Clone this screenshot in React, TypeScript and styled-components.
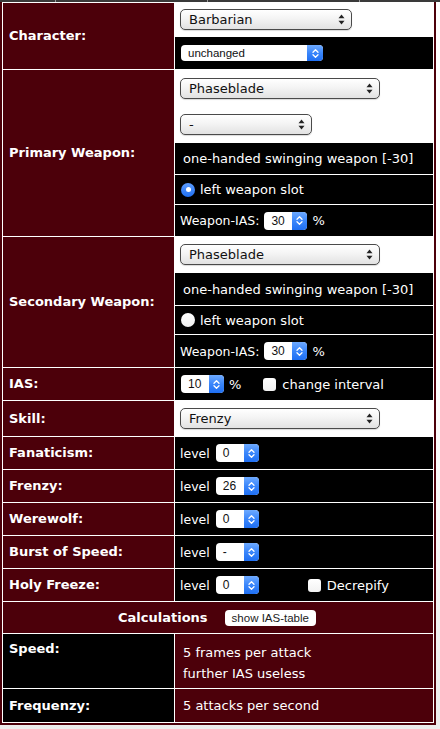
import React from "react";
import styled, { createGlobalStyle } from "styled-components";

const RED = "#4c000a";
const BLACK = "#000000";
const WHITE = "#ffffff";

const GlobalStyle = createGlobalStyle`
  html, body { margin: 0; padding: 0; }
  body {
    min-height: 729px;
    background: linear-gradient(#ffffff 0%, #ffffff 50%, #ececec 100%);
    font-family: "DejaVu Sans", Verdana, sans-serif;
  }
`;

const Page = styled.div`
  width: 440px;
`;

const TopStrip = styled.div`
  display: flex;
  height: 2px;
  background: #3a3a3a;
`;

const StripSeg = styled.div<{ $w?: number }>`
  width: ${(p) => (p.$w ? `${p.$w}px` : "auto")};
  flex: ${(p) => (p.$w ? "none" : "1")};
  height: 100%;
  border-right: ${(p) => (p.$w ? "1px solid #9a9a9a" : "none")};
`;

const Sheet = styled.div`
  width: 436px;
  box-sizing: border-box;
  border: 2px solid ${RED};
  border-top: 0;
  background: ${WHITE};
  padding: 1px;
  display: flex;
  flex-direction: column;
  gap: 1px;
`;

const Row = styled.div`
  display: grid;
  grid-template-columns: 171px 258px;
  column-gap: 1px;
`;

const Label = styled.div<{ $bg: string; $top?: boolean }>`
  background: ${(p) => p.$bg};
  color: #fff;
  font-weight: bold;
  font-size: 13px;
  line-height: 16px;
  display: flex;
  align-items: ${(p) => (p.$top ? "flex-start" : "center")};
  padding: ${(p) => (p.$top ? "7px 0 0 6px" : "0 0 0 6px")};
`;

const Stack = styled.div`
  display: flex;
  flex-direction: column;
  gap: 1px;
`;

const Cell = styled.div<{ $bg: string; $h: number; $pl?: number }>`
  height: ${(p) => p.$h}px;
  box-sizing: border-box;
  background: ${(p) => p.$bg};
  color: #fff;
  font-size: 13px;
  display: flex;
  align-items: center;
  padding-left: ${(p) => p.$pl ?? 5}px;
  white-space: nowrap;
`;

const TextBlock = styled.div<{ $bg: string; $h: number }>`
  height: ${(p) => p.$h}px;
  box-sizing: border-box;
  background: ${(p) => p.$bg};
  color: #fff;
  font-size: 13px;
  line-height: 21px;
  padding: 8px 0 0 8px;
  display: flex;
  flex-direction: column;
`;

const HeaderCell = styled.div`
  grid-column: 1 / span 2;
  height: 31px;
  background: ${RED};
  color: #fff;
  display: flex;
  align-items: center;
  justify-content: center;
  gap: 17px;
  padding-right: 2px;
`;

const HeaderTitle = styled.span`
  font-weight: bold;
  font-size: 13px;
`;

const SmallText = styled.span<{ $ml?: number }>`
  font-size: 12.5px;
  margin-left: ${(p) => p.$ml ?? 0}px;
`;

const Inline = styled.span<{ $ml?: number }>`
  margin-left: ${(p) => p.$ml ?? 0}px;
`;

/* macOS-like popup select */
const SelectBox = styled.div<{ $w: number }>`
  width: ${(p) => p.$w}px;
  height: 21px;
  box-sizing: border-box;
  border: 1px solid #4a4a4a;
  border-radius: 5px;
  background: linear-gradient(#ffffff 0%, #f4f4f4 45%, #e2e2e2 100%);
  box-shadow: 0 1px 1px rgba(0, 0, 0, 0.15);
  display: flex;
  align-items: center;
  padding-right: 6px;
`;

const NativeSelect = styled.select`
  appearance: none;
  -webkit-appearance: none;
  flex: 1;
  min-width: 0;
  height: 100%;
  border: 0;
  margin: 0;
  background: transparent;
  font: 13px "DejaVu Sans", Verdana, sans-serif;
  color: #111;
  padding: 0 0 0 8px;
  outline: none;
`;

/* small combo with blue stepper */
const ComboBox = styled.div<{ $w: number; $h: number }>`
  width: ${(p) => p.$w}px;
  height: ${(p) => p.$h}px;
  border-radius: 4px;
  overflow: hidden;
  background: #fff;
  display: flex;
  align-items: stretch;
`;

const SmallSelect = styled.select`
  appearance: none;
  -webkit-appearance: none;
  flex: 1;
  min-width: 0;
  border: 0;
  margin: 0;
  background: transparent;
  font: 11.5px "Liberation Sans", Arial, sans-serif;
  color: #111;
  padding: 0 0 0 7px;
  outline: none;
`;

const SpinValue = styled.span`
  flex: 1;
  font: 12px "Liberation Sans", Arial, sans-serif;
  color: #111;
  padding-left: 7px;
  display: flex;
  align-items: center;
`;

const Stepper = styled.span<{ $w?: number }>`
  width: ${(p) => p.$w ?? 15}px;
  background: linear-gradient(#6eaaff 0%, #3a86fb 50%, #1f6ff2 100%);
  display: flex;
  align-items: center;
  justify-content: center;
`;

const Radio = styled.span<{ $on?: boolean }>`
  width: 14px;
  height: 14px;
  border-radius: 50%;
  box-sizing: border-box;
  background: ${(p) =>
    p.$on ? "linear-gradient(#5d9dff, #1f6ff2)" : "linear-gradient(#ffffff, #f0f0f0)"};
  display: inline-flex;
  align-items: center;
  justify-content: center;
  margin-right: 5px;
  flex: none;
`;

const RadioDot = styled.span`
  width: 5px;
  height: 5px;
  border-radius: 50%;
  background: #fff;
`;

const Check = styled.span<{ $ml?: number }>`
  width: 13px;
  height: 13px;
  border-radius: 3px;
  background: linear-gradient(#ffffff, #f2f2f2);
  display: inline-block;
  margin-left: ${(p) => p.$ml ?? 0}px;
  margin-right: 6px;
  flex: none;
`;

const Button = styled.button`
  height: 16px;
  padding: 0 7px;
  border: 0;
  border-radius: 4px;
  background: #fff;
  color: #222;
  font: 11.5px "Liberation Sans", Arial, sans-serif;
  line-height: 16px;
`;

const PopupArrows = () => (
  <svg width="7" height="11" viewBox="0 0 7 11">
    <polygon points="0.5,4.3 3.5,0.6 6.5,4.3" fill="#222" />
    <polygon points="0.5,6.7 3.5,10.4 6.5,6.7" fill="#222" />
  </svg>
);

const Chevrons = () => (
  <svg width="7" height="11" viewBox="0 0 7 11">
    <polyline points="1,4.2 3.5,1.7 6,4.2" fill="none" stroke="#fff" strokeWidth="1.3" strokeLinecap="round" strokeLinejoin="round" />
    <polyline points="1,6.8 3.5,9.3 6,6.8" fill="none" stroke="#fff" strokeWidth="1.3" strokeLinecap="round" strokeLinejoin="round" />
  </svg>
);

const Popup = ({ w, value }: { w: number; value: string }) => (
  <SelectBox $w={w}>
    <NativeSelect defaultValue={value}>
      <option>{value}</option>
    </NativeSelect>
    <PopupArrows />
  </SelectBox>
);

const Spin = ({ value, ml }: { value: string; ml?: number }) => (
  <Inline $ml={ml}>
    <ComboBox $w={43} $h={18}>
      <SpinValue>{value}</SpinValue>
      <Stepper>
        <Chevrons />
      </Stepper>
    </ComboBox>
  </Inline>
);

const LevelRow = ({ label, value, extra }: { label: string; value: string; extra?: React.ReactNode }) => (
  <Row>
    <Label $bg={RED}>{label}</Label>
    <Cell $bg={BLACK} $h={32}>
      <SmallText>level</SmallText>
      <Spin value={value} ml={6} />
      {extra}
    </Cell>
  </Row>
);

export default function App() {
  return (
    <Page>
      <GlobalStyle />
      <TopStrip>
        <StripSeg $w={55} />
        <StripSeg $w={151} />
        <StripSeg $w={151} />
        <StripSeg />
      </TopStrip>
      <Sheet>
        <Row>
          <Label $bg={RED}>Character:</Label>
          <Stack>
            <Cell $bg={WHITE} $h={33}>
              <Popup w={172} value="Barbarian" />
            </Cell>
            <Cell $bg={BLACK} $h={32} $pl={6}>
              <ComboBox $w={142} $h={16}>
                <SmallSelect defaultValue="unchanged">
                  <option>unchanged</option>
                </SmallSelect>
                <Stepper $w={16}>
                  <Chevrons />
                </Stepper>
              </ComboBox>
            </Cell>
          </Stack>
        </Row>

        <Row>
          <Label $bg={RED}>Primary Weapon:</Label>
          <Stack>
            <Cell $bg={WHITE} $h={36}>
              <Popup w={200} value="Phaseblade" />
            </Cell>
            <Cell $bg={WHITE} $h={35}>
              <Popup w={132} value="-" />
            </Cell>
            <Cell $bg={BLACK} $h={31} $pl={8}>one-handed swinging weapon [-30]</Cell>
            <Cell $bg={BLACK} $h={29} $pl={6}>
              <Radio $on>
                <RadioDot />
              </Radio>
              left weapon slot
            </Cell>
            <Cell $bg={BLACK} $h={31}>
              <SmallText>Weapon-IAS:</SmallText>
              <Spin value="30" ml={5} />
              <Inline $ml={5}>%</Inline>
            </Cell>
          </Stack>
        </Row>

        <Row>
          <Label $bg={RED}>Secondary Weapon:</Label>
          <Stack>
            <Cell $bg={WHITE} $h={35}>
              <Popup w={200} value="Phaseblade" />
            </Cell>
            <Cell $bg={BLACK} $h={32} $pl={8}>one-handed swinging weapon [-30]</Cell>
            <Cell $bg={BLACK} $h={28} $pl={6}>
              <Radio />
              left weapon slot
            </Cell>
            <Cell $bg={BLACK} $h={32}>
              <SmallText>Weapon-IAS:</SmallText>
              <Spin value="30" ml={5} />
              <Inline $ml={5}>%</Inline>
            </Cell>
          </Stack>
        </Row>

        <Row>
          <Label $bg={RED}>IAS:</Label>
          <Cell $bg={BLACK} $h={32} $pl={6}>
            <Spin value="10" />
            <Inline $ml={5}>%</Inline>
            <Check $ml={22} />
            change interval
          </Cell>
        </Row>

        <Row>
          <Label $bg={RED}>Skill:</Label>
          <Cell $bg={WHITE} $h={35}>
            <Popup w={200} value="Frenzy" />
          </Cell>
        </Row>

        <LevelRow label="Fanaticism:" value="0" />
        <LevelRow label="Frenzy:" value="26" />
        <LevelRow label="Werewolf:" value="0" />
        <LevelRow label="Burst of Speed:" value="-" />
        <LevelRow
          label="Holy Freeze:"
          value="0"
          extra={
            <>
              <Check $ml={49} />
              Decrepify
            </>
          }
        />

        <Row>
          <HeaderCell>
            <HeaderTitle>Calculations</HeaderTitle>
            <Button type="button">show IAS-table</Button>
          </HeaderCell>
        </Row>

        <Row>
          <Label $bg={BLACK} $top>
            Speed:
          </Label>
          <TextBlock $bg={RED} $h={54}>
            <span>5 frames per attack</span>
            <span>further IAS useless</span>
          </TextBlock>
        </Row>

        <Row>
          <Label $bg={BLACK}>Frequenzy:</Label>
          <Cell $bg={RED} $h={33} $pl={8}>
            5 attacks per second
          </Cell>
        </Row>
      </Sheet>
    </Page>
  );
}
